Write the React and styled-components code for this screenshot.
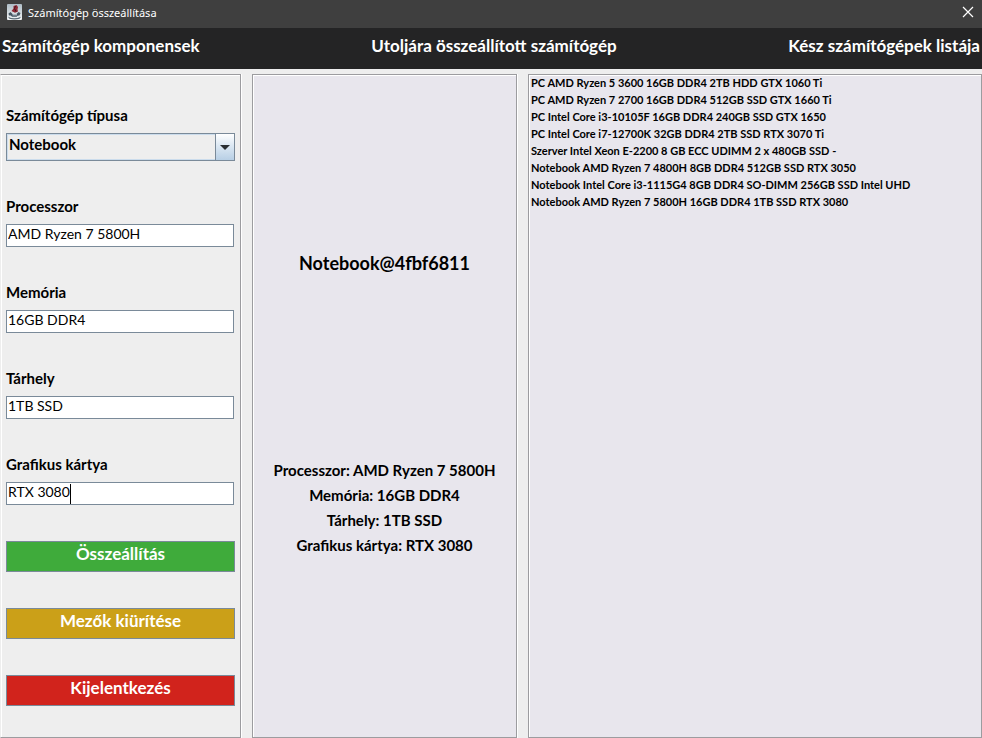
import React, { useState } from "react";
import styled, { createGlobalStyle } from "styled-components";

const GlobalStyle = createGlobalStyle`
  *, *::before, *::after { box-sizing: border-box; }
  body {
    margin: 0;
    background: #eeeeee;
    color: #000000;
    font-family: Lato, "Liberation Sans", sans-serif;
  }
  button, input, select { font: inherit; margin: 0; border-radius: 0; }
`;

const Window = styled.div`
  display: flex;
  flex-direction: column;
  min-height: 100vh;
`;

const TitleBar = styled.header`
  display: flex;
  align-items: center;
  gap: 6px;
  height: 28px;
  padding: 0 7px;
  background: #3f3f3f;
  color: #ffffff;
`;

const WindowTitle = styled.span`
  flex: 1;
  padding-bottom: 2px;
  font-family: "Noto Sans", "Open Sans", sans-serif;
  font-size: 11px;
  line-height: 16px;
`;

const AppIcon = styled.svg`
  display: block;
  width: 15px;
  height: 16px;
  margin-bottom: 4px;
`;

const CloseButton = styled.button`
  display: flex;
  padding: 0;
  margin-bottom: 4px;
  border: 0;
  background: none;
  color: #ffffff;
`;

const HeadingBar = styled.div`
  display: flex;
  justify-content: space-between;
  height: 41px;
  padding: 8px 2px 0;
  background: #242425;
  color: #ffffff;
`;

const Heading = styled.h2`
  margin: 0;
  font-size: 17px;
  font-weight: 700;
  line-height: 20px;
  white-space: nowrap;
`;

const Columns = styled.main`
  flex: 1;
  display: grid;
  grid-template-columns: 241fr 265fr 454fr;
  gap: 11px;
  padding-top: 5px;
`;

const Panel = styled.section`
  min-width: 0;
  border: 1px solid #9c9c9f;
  box-shadow: inset 1px 1px 0 #ffffff, 1px 0 0 #ffffff;
  background: ${(p) => (p.$tinted ? "#e8e6ed" : "#eeeeee")};
`;

const FormPanel = styled(Panel)`
  padding: 30px 5px 0;
  border-left-color: #eeeeee;
`;

const Form = styled.form`
  display: flex;
  flex-direction: column;
  gap: 36px;
`;

const Fields = styled.div`
  display: flex;
  flex-direction: column;
  gap: 35px;
`;

const Field = styled.div`
  display: flex;
  flex-direction: column;
  gap: 8px;
`;

const Label = styled.label`
  font-size: 15px;
  font-weight: 700;
  line-height: 20px;
`;

const Combo = styled.div`
  display: grid;
  grid-template-columns: 1fr 19px;
  height: 28px;
  border: 1px solid #7a8a99;
  box-shadow: inset 0 0 0 1px #cbdcec;
`;

const ComboSelect = styled.select`
  grid-area: 1 / 1 / 2 / 3;
  appearance: none;
  height: 26px;
  padding: 0 22px 6px 2px;
  border: 0;
  outline: none;
  background: none;
  color: #000000;
  font-size: 15px;
  font-weight: 700;
  line-height: 20px;
`;

const ComboArrow = styled.span`
  grid-area: 1 / 2 / 2 / 3;
  display: flex;
  align-items: center;
  justify-content: center;
  border-left: 1px solid #7a8a99;
  background: linear-gradient(#ffffff, #dce8f3 45%, #b8cfe5);
  pointer-events: none;
`;

const TextBoxFrame = styled.div`
  display: grid;
  margin-right: 1px;
`;

const TextBox = styled.input`
  grid-area: 1 / 1;
  min-width: 0;
  height: 23px;
  padding: 0 1px 5px;
  border: 1px solid #7a8a99;
  outline: none;
  background: #ffffff;
  color: #000000;
  caret-color: transparent;
  font-size: 14px;
  line-height: 17px;
`;

const Caret = styled.span`
  grid-area: 1 / 1;
  justify-self: start;
  height: 20px;
  margin: 2px 0 0 2px;
  border-right: 1px solid #000000;
  font-size: 14px;
  line-height: 17px;
  white-space: pre;
  pointer-events: none;

  &::before {
    content: attr(data-value);
    visibility: hidden;
  }
`;

const ActionButton = styled.button`
  height: 31px;
  padding: 0 0 5px;
  border: 1px solid #7a8a99;
  background: ${(p) => p.$color};
  color: #ffffff;
  font-size: 17px;
  font-weight: 700;
  line-height: 20px;
`;

const ResultPanel = styled(Panel)`
  padding-top: 176px;
  text-align: center;
`;

const ComputerName = styled.h3`
  margin: 0 0 183px;
  font-size: 18px;
  font-weight: 700;
  line-height: 24px;
`;

const Spec = styled.p`
  margin: 0;
  font-size: 15px;
  font-weight: 700;
  line-height: 25px;
`;

const ListPanel = styled(Panel)`
  border-top: 0;
  box-shadow: inset 0 1px 0 #9c9c9f, inset 1px 2px 0 #ffffff, 1px 0 0 #ffffff;
`;

const ComputerList = styled.ul`
  margin: 0;
  padding: 0 2px;
  list-style: none;
`;

const ComputerItem = styled.li`
  font-size: 11px;
  font-weight: 700;
  line-height: 17px;
  white-space: nowrap;
`;

const FIELDS = [
  { id: "cpu", label: "Processzor", value: "AMD Ryzen 7 5800H" },
  { id: "memory", label: "Memória", value: "16GB DDR4" },
  { id: "storage", label: "Tárhely", value: "1TB SSD" },
  { id: "gpu", label: "Grafikus kártya", value: "RTX 3080" },
];

const COMPUTERS = [
  "PC AMD Ryzen 5 3600 16GB DDR4 2TB HDD GTX 1060 Ti",
  "PC AMD Ryzen 7 2700 16GB DDR4 512GB SSD GTX 1660 Ti",
  "PC Intel Core i3-10105F 16GB DDR4 240GB SSD GTX 1650",
  "PC Intel Core i7-12700K 32GB DDR4 2TB SSD RTX 3070 Ti",
  "Szerver Intel Xeon E-2200 8 GB ECC UDIMM 2 x 480GB SSD -",
  "Notebook AMD Ryzen 7 4800H 8GB DDR4 512GB SSD RTX 3050",
  "Notebook Intel Core i3-1115G4 8GB DDR4 SO-DIMM 256GB SSD Intel UHD",
  "Notebook AMD Ryzen 7 5800H 16GB DDR4 1TB SSD RTX 3080",
];

function JavaIcon() {
  return (
    <AppIcon viewBox="0 0 15 16" aria-hidden="true">
      <defs>
        <linearGradient id="tile" x1="0" y1="0" x2="0" y2="1">
          <stop offset="0" stopColor="#aebcc6" />
          <stop offset="1" stopColor="#f3f5f6" />
        </linearGradient>
      </defs>
      <rect width="15" height="16" rx="1" fill="url(#tile)" />
      <path d="M6.500 2 9.500 1l1.500 2-.5 2.500 .5 2L8 8.800 4.500 7 6.500 4.500z" fill="#8e2733" />
      <path d="M8.500 2 7.500 4.500l1.500 3" fill="none" stroke="#3d1820" />
      <path d="M1.500 9.500 3.500 8l2 2h4L11.500 8l2 1-1 2.500-2 .3-.8 1H5L3.800 11.500 2 11.500z" fill="#465663" />
      <path d="M5.500 10.800h4.500" stroke="#dbe3e8" />
      <path d="M1 12.800q6 3 13 0l-1.500 2q-5 1.200-10 0z" fill="#566672" />
    </AppIcon>
  );
}

export default function App() {
  const [type, setType] = useState("Notebook");
  const [values, setValues] = useState(() =>
    Object.fromEntries(FIELDS.map((f) => [f.id, f.value]))
  );
  const [active, setActive] = useState("gpu");
  const clear = () => setValues(Object.fromEntries(FIELDS.map((f) => [f.id, ""])));

  return (
    <>
      <GlobalStyle />
      <Window>
        <TitleBar>
          <JavaIcon />
          <WindowTitle>Számítógép összeállítása</WindowTitle>
          <CloseButton type="button" aria-label="Bezárás">
            <svg width="14" height="12" viewBox="0 0 14 12" aria-hidden="true">
              <path d="M2 1l10 10M12 1L2 11" stroke="currentColor" strokeWidth="1.2" />
            </svg>
          </CloseButton>
        </TitleBar>
        <HeadingBar>
          <Heading>Számítógép komponensek</Heading>
          <Heading>Utoljára összeállított számítógép</Heading>
          <Heading>Kész számítógépek listája</Heading>
        </HeadingBar>
        <Columns>
          <FormPanel>
            <Form onSubmit={(e) => e.preventDefault()}>
              <Fields>
                <Field>
                  <Label htmlFor="type">Számítógép típusa</Label>
                  <Combo>
                    <ComboSelect id="type" value={type} onChange={(e) => setType(e.target.value)}>
                      <option>Notebook</option>
                      <option>PC</option>
                      <option>Szerver</option>
                    </ComboSelect>
                    <ComboArrow>
                      <svg width="10" height="5" viewBox="0 0 10 5" aria-hidden="true">
                        <path d="M0 0h10L5 5z" fill="#2b2f33" />
                      </svg>
                    </ComboArrow>
                  </Combo>
                </Field>
                {FIELDS.map((f) => (
                  <Field key={f.id}>
                    <Label htmlFor={f.id}>{f.label}</Label>
                    <TextBoxFrame>
                      <TextBox
                        id={f.id}
                        type="text"
                        value={values[f.id]}
                        onFocus={() => setActive(f.id)}
                        onChange={(e) => setValues({ ...values, [f.id]: e.target.value })}
                      />
                      {active === f.id && <Caret data-value={values[f.id]} aria-hidden="true" />}
                    </TextBoxFrame>
                  </Field>
                ))}
              </Fields>
              <ActionButton type="submit" $color="#3fab3b">Összeállítás</ActionButton>
              <ActionButton type="button" $color="#cba018" onClick={clear}>Mezők kiürítése</ActionButton>
              <ActionButton type="button" $color="#d1231c">Kijelentkezés</ActionButton>
            </Form>
          </FormPanel>
          <ResultPanel $tinted>
            <ComputerName>Notebook@4fbf6811</ComputerName>
            {FIELDS.map((f) => (
              <Spec key={f.id}>{f.label}: {f.value}</Spec>
            ))}
          </ResultPanel>
          <ListPanel $tinted>
            <ComputerList>
              {COMPUTERS.map((c) => (
                <ComputerItem key={c}>{c}</ComputerItem>
              ))}
            </ComputerList>
          </ListPanel>
        </Columns>
      </Window>
    </>
  );
}
